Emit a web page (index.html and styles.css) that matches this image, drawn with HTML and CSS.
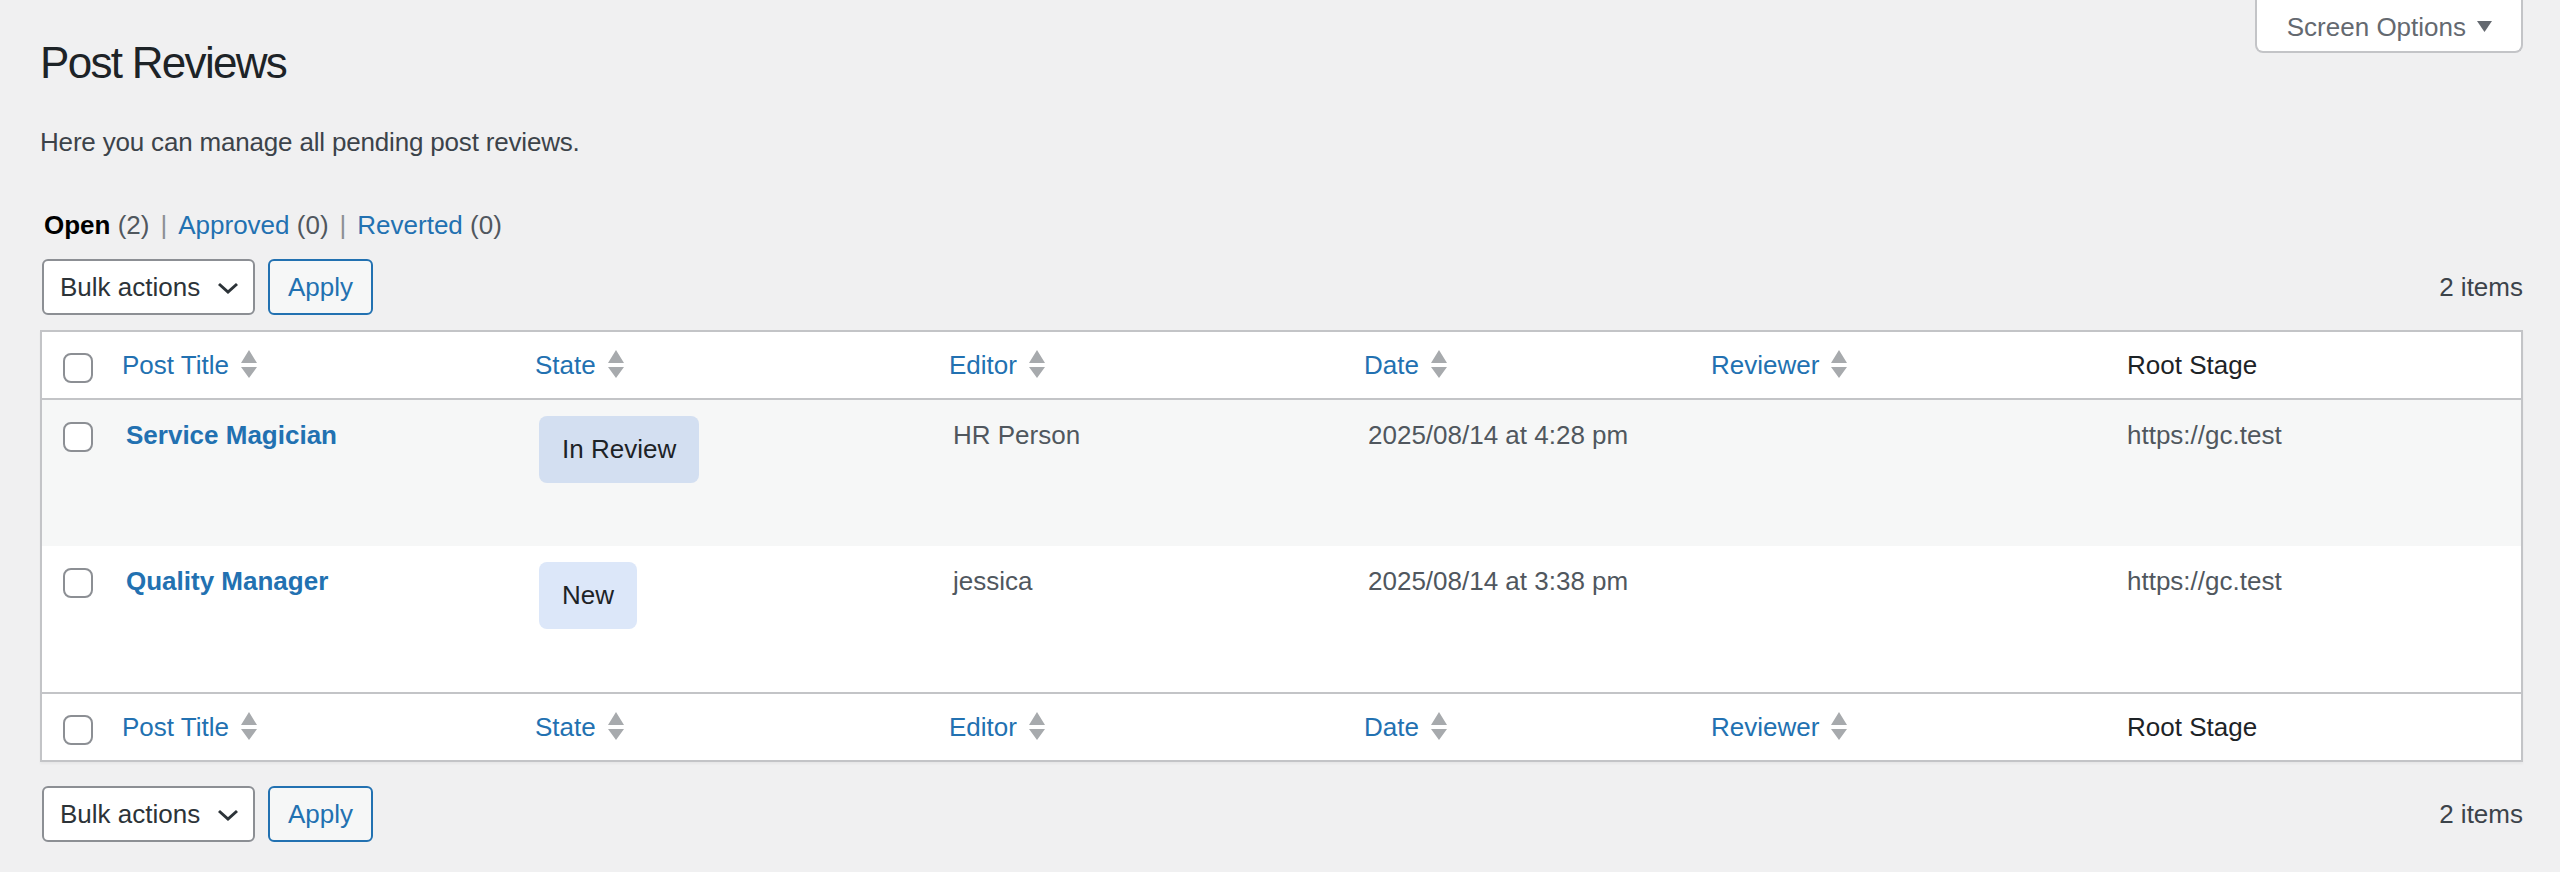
FILE: index.html
```html
<!DOCTYPE html>
<html lang="en">
<head>
  <meta charset="UTF-8" />
  <meta name="viewport" content="width=device-width, initial-scale=1.0"/>
  <title>Post Reviews</title>
  <link rel="stylesheet" href="styles.css">
</head>
<body>
  <div class="screen-meta-links">
    <button class="screen-options">Screen Options<svg class="so-arrow" width="15" height="11" viewBox="0 0 15 11"><path d="M0 0H15L7.5 11Z"/></svg></button>
  </div>
  <div class="wrap">
    <h1>Post Reviews</h1>
    <p class="intro">Here you can manage all pending post reviews.</p>
    <ul class="subsubsub">
      <li><a class="current" href="#">Open</a> <span class="count">(2)</span></li>
      <li class="sep">|</li>
      <li><a href="#">Approved</a> <span class="count">(0)</span></li>
      <li class="sep">|</li>
      <li><a href="#">Reverted</a> <span class="count">(0)</span></li>
    </ul>

    <div class="tablenav">
      <div class="actions">
        <div class="select-wrap">
          <select><option>Bulk actions</option></select>
          <svg class="chevron" width="22" height="12" viewBox="0 0 22 12"><path d="M2 2L11 10L20 2"/></svg>
        </div>
        <button class="button">Apply</button>
      </div>
      <span class="displaying-num">2 items</span>
    </div>

    <table class="reviews">
      <colgroup>
        <col class="c-cb"><col class="c-title"><col class="c-state"><col class="c-editor"><col class="c-date"><col class="c-reviewer"><col class="c-root">
      </colgroup>
      <thead>
        <tr>
          <th class="check-column"><input type="checkbox"></th>
          <th class="sortable"><a href="#">Post Title<svg class="sort-ind" width="16" height="28" viewBox="0 0 16 28"><path d="M8 0L16 13H0Z M0 17H16L8 28Z"/></svg></a></th>
          <th class="sortable"><a href="#">State<svg class="sort-ind" width="16" height="28" viewBox="0 0 16 28"><path d="M8 0L16 13H0Z M0 17H16L8 28Z"/></svg></a></th>
          <th class="sortable"><a href="#">Editor<svg class="sort-ind" width="16" height="28" viewBox="0 0 16 28"><path d="M8 0L16 13H0Z M0 17H16L8 28Z"/></svg></a></th>
          <th class="sortable"><a href="#">Date<svg class="sort-ind" width="16" height="28" viewBox="0 0 16 28"><path d="M8 0L16 13H0Z M0 17H16L8 28Z"/></svg></a></th>
          <th class="sortable"><a href="#">Reviewer<svg class="sort-ind" width="16" height="28" viewBox="0 0 16 28"><path d="M8 0L16 13H0Z M0 17H16L8 28Z"/></svg></a></th>
          <th class="plain">Root Stage</th>
        </tr>
      </thead>
      <tbody>
        <tr class="alternate">
          <td class="check-column"><input type="checkbox"></td>
          <td><strong><a class="row-title" href="#">Service Magician</a></strong></td>
          <td><span class="badge in-review">In Review</span></td>
          <td>HR Person</td>
          <td>2025/08/14 at 4:28 pm</td>
          <td></td>
          <td>https://gc.test</td>
        </tr>
        <tr>
          <td class="check-column"><input type="checkbox"></td>
          <td><strong><a class="row-title" href="#">Quality Manager</a></strong></td>
          <td><span class="badge new">New</span></td>
          <td>jessica</td>
          <td>2025/08/14 at 3:38 pm</td>
          <td></td>
          <td>https://gc.test</td>
        </tr>
      </tbody>
      <tfoot>
        <tr>
          <th class="check-column"><input type="checkbox"></th>
          <th class="sortable"><a href="#">Post Title<svg class="sort-ind" width="16" height="28" viewBox="0 0 16 28"><path d="M8 0L16 13H0Z M0 17H16L8 28Z"/></svg></a></th>
          <th class="sortable"><a href="#">State<svg class="sort-ind" width="16" height="28" viewBox="0 0 16 28"><path d="M8 0L16 13H0Z M0 17H16L8 28Z"/></svg></a></th>
          <th class="sortable"><a href="#">Editor<svg class="sort-ind" width="16" height="28" viewBox="0 0 16 28"><path d="M8 0L16 13H0Z M0 17H16L8 28Z"/></svg></a></th>
          <th class="sortable"><a href="#">Date<svg class="sort-ind" width="16" height="28" viewBox="0 0 16 28"><path d="M8 0L16 13H0Z M0 17H16L8 28Z"/></svg></a></th>
          <th class="sortable"><a href="#">Reviewer<svg class="sort-ind" width="16" height="28" viewBox="0 0 16 28"><path d="M8 0L16 13H0Z M0 17H16L8 28Z"/></svg></a></th>
          <th class="plain">Root Stage</th>
        </tr>
      </tfoot>
    </table>

    <div class="tablenav bottom">
      <div class="actions">
        <div class="select-wrap">
          <select><option>Bulk actions</option></select>
          <svg class="chevron" width="22" height="12" viewBox="0 0 22 12"><path d="M2 2L11 10L20 2"/></svg>
        </div>
        <button class="button">Apply</button>
      </div>
      <span class="displaying-num">2 items</span>
    </div>
  </div>
</body>
</html>
```

FILE: styles.css
```css
body {
  margin: 0;
  background: #f0f0f1;
  font-family: "Liberation Sans", Arial, sans-serif;
  font-size: 26px;
  line-height: 39px;
  color: #3c434a;
}
a {
  color: #2271b1;
  text-decoration: none;
}

/* screen options tab */
.screen-meta-links {
  float: right;
  margin-right: 37px;
}
.screen-options {
  display: block;
  height: 53px;
  box-sizing: border-box;
  padding: 8px 29px 4px 30px;
  background: #fff;
  border: 2px solid #c3c4c7;
  border-top: none;
  border-radius: 0 0 8px 8px;
  font-family: inherit;
  font-size: 26px;
  line-height: 39px;
  color: #646970;
}
.so-arrow {
  margin-left: 11px;
  vertical-align: 4px;
  fill: #646970;
}

.wrap {
  padding: 34px 37px 40px 40px;
}
h1 {
  margin: 0;
  font-size: 44px;
  line-height: 57px;
  font-weight: 400;
  letter-spacing: -1.7px;
  color: #1d2327;
}
.intro {
  margin: 32px 0 0;
  letter-spacing: -0.18px;
}

/* status filter links */
.subsubsub {
  display: flex;
  gap: 11px;
  margin: 44px 0 0 4px;
  padding: 0;
  list-style: none;
  color: #646970;
}
.subsubsub .current {
  color: #000;
  font-weight: 700;
}
.subsubsub .count {
  color: #50575e;
}
.subsubsub .sep {
  color: #8c8f94;
}

/* bulk actions bar */
.tablenav {
  display: flex;
  align-items: center;
  justify-content: space-between;
  margin-top: 14px;
}
.tablenav.bottom {
  margin-top: 24px;
}
.actions {
  display: flex;
  align-items: center;
  gap: 13px;
  margin-left: 2px;
}
.select-wrap {
  position: relative;
}
.select-wrap select {
  appearance: none;
  display: block;
  width: 213px;
  height: 56px;
  padding: 0 50px 0 16px;
  background: #fff;
  border: 2px solid #8c8f94;
  border-radius: 6px;
  font-family: inherit;
  font-size: 26px;
  color: #2c3338;
}
.chevron {
  position: absolute;
  right: 16px;
  top: 23px;
  fill: none;
  stroke: #2c3338;
  stroke-width: 3;
  pointer-events: none;
}
.button {
  height: 56px;
  padding: 0 18px;
  background: #f6f7f7;
  border: 2px solid #2271b1;
  border-radius: 6px;
  font-family: inherit;
  font-size: 26px;
  color: #2271b1;
  cursor: pointer;
}
.displaying-num {
  color: #3c434a;
}

/* list table */
.reviews {
  width: 100%;
  table-layout: fixed;
  border-collapse: separate;
  border-spacing: 0;
  margin-top: 15px;
  background: #fff;
  border: 2px solid #c3c4c7;
  box-shadow: 0 2px 2px rgba(0,0,0,0.04);
}
.c-cb { width: 64px; }
.c-title { width: 413px; }
.c-state { width: 414px; }
.c-editor { width: 415px; }
.c-date { width: 347px; }
.c-reviewer { width: 412px; }
.c-root { width: 414px; }

.reviews th {
  text-align: left;
  font-weight: 400;
  line-height: 36px;
  padding: 15px 16px;
  vertical-align: top;
}
.reviews thead th {
  border-bottom: 2px solid #c3c4c7;
}
.reviews tfoot th {
  border-top: 2px solid #c3c4c7;
}
.reviews th.plain {
  padding: 15px 20px;
  color: #1d2327;
}
.reviews th.check-column {
  padding: 21px 0 0 21px;
}
.sort-ind {
  margin-left: 12px;
  vertical-align: -4px;
  fill: #a7aaad;
}

.reviews td {
  padding: 16px 20px 0;
  vertical-align: top;
  color: #50575e;
}
.reviews tbody tr {
  height: 146px;
}
.reviews tr.alternate {
  background: #f6f7f7;
}
.reviews td.check-column {
  padding: 22px 0 0 21px;
}
.row-title {
  font-weight: 700;
}

input[type="checkbox"] {
  appearance: none;
  display: block;
  width: 30px;
  height: 30px;
  margin: 0;
  background: #fff;
  border: 2px solid #8c8f94;
  border-radius: 8px;
}

.badge {
  display: inline-block;
  padding: 14px 23px;
  border-radius: 8px;
  color: #1d2327;
}
.badge.in-review {
  background: #d3dff1;
}
.badge.new {
  background: #dce7f9;
}
```
